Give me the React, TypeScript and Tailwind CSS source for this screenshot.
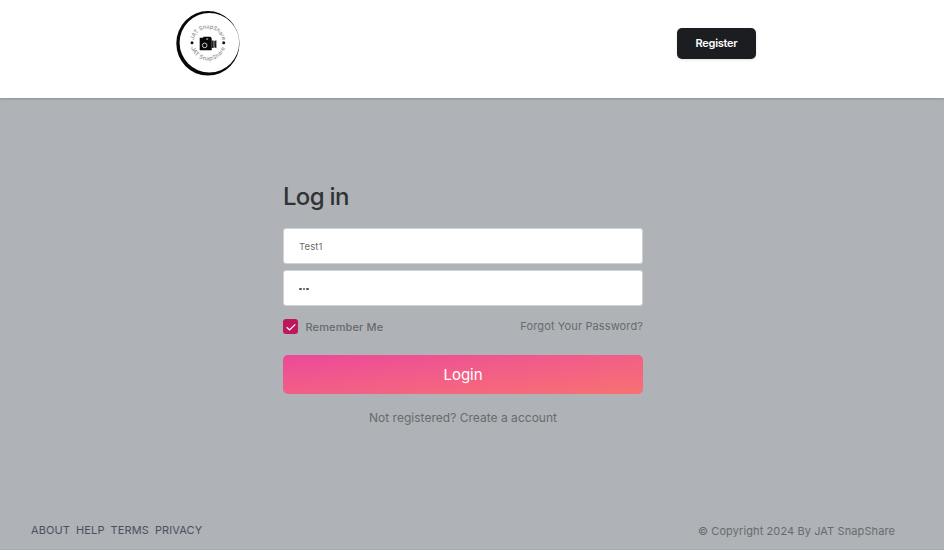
import React from 'react';

function Logo() {
  return (
    <svg viewBox="0 0 80 75" className="h-[75px] w-20" aria-label="JAT SnapShare">
      <defs>
        <path id="upper-arc" d="M 23.5 38 A 14.5 14.5 0 0 1 52.5 38" />
        <path id="lower-arc" d="M 20.5 38 A 17.5 17.5 0 0 0 55.5 38" />
      </defs>
      <path
        fillRule="evenodd"
        fill="#080808"
        d="M37.9 6A31.6 32.3 0 1 1 37.9 70.6A31.6 32.3 0 1 1 37.9 6ZM39.4 8A29.8 29.7 0 1 0 39.4 67.4A29.8 29.7 0 1 0 39.4 8Z"
      />
      <g fill="#777" fontSize="5.6" fontFamily="Inter, sans-serif" textAnchor="middle">
        <text letterSpacing="-.05">
          <textPath href="#upper-arc" startOffset="50%">JAT SnapShare</textPath>
        </text>
        <text letterSpacing=".4">
          <textPath href="#lower-arc" startOffset="50%">JAT SnapShare</textPath>
        </text>
      </g>
      <circle cx="22" cy="37.7" r="1.5" fill="#111" />
      <circle cx="53.7" cy="37.7" r="1.5" fill="#111" />
      <path d="M29.7 32.8h3l1-1h6.8l1.2 1.5v12H29.7z" fill="#080808" />
      <path d="M41.5 35.5h2.2v7.5h-2.2zM44.2 36l2.2-.8v8l-2.2-1z" fill="#222" />
      <circle cx="34.7" cy="40.4" r="2.3" fill="#080808" stroke="#ddd" strokeWidth=".9" />
      <rect x="36.2" y="33.3" width="2" height="1.5" fill="#999" />
    </svg>
  );
}

export default function App() {
  return (
    <div className="flex h-[550px] w-full flex-col bg-[#afb2b7] font-['Inter',sans-serif] text-[#686b6d]">
      <header className="flex h-[98px] shrink-0 items-start justify-between bg-white pr-[188px] pl-[170px] shadow-[0_1px_2px_rgba(0,0,0,0.2)]">
        <div className="pt-[5px]">
          <Logo />
        </div>
        <button className="mt-7 h-[31px] w-[79px] rounded-[5px] bg-[#1c1d21] text-[11px] font-semibold tracking-[-0.25px] text-white shadow-sm">
          Register
        </button>
      </header>

      <main className="flex grow justify-center pt-[84px] pr-[18px]">
        <form className="w-[360px]">
          <h1 className="text-2xl leading-[30px] font-medium tracking-[-0.7px] text-[#303234]">Log in</h1>
          <div className="mt-4 flex h-9 items-center rounded-[3px] border border-[#d1d2d4] bg-white px-[15px] pt-[3px] text-[9.5px] tracking-[0.1px]">
            Test1
          </div>
          <div className="mt-1.5 flex h-9 items-center gap-px rounded-[3px] border border-[#d1d2d4] bg-white px-[15px] pt-px">
            <i className="h-0.5 w-[2.7px] rounded-[1px] bg-[#555]" />
            <i className="h-0.5 w-[2.7px] rounded-[1px] bg-[#555]" />
            <i className="h-0.5 w-[2.7px] rounded-[1px] bg-[#555]" />
          </div>
          <div className="mt-[13px] flex h-[15px] items-center">
            <span className="flex h-[15px] w-[15px] items-center justify-center rounded-[3px] bg-[#be185d]">
              <svg viewBox="0 0 12 12" className="h-3 w-3" fill="none" stroke="#fff" strokeWidth="1.2">
                <path d="M1.7 6.2 4.6 9 10.3 3.3" />
              </svg>
            </span>
            <span className="ml-[7.5px] text-[11px] leading-[14px] font-medium tracking-[0.13px]">Remember Me</span>
            <a className="ml-auto pb-0.5 text-[11px] leading-[14px] tracking-[0.12px]">Forgot Your Password?</a>
          </div>
          <button
            type="button"
            className="mt-[21px] block h-[39px] w-full rounded-[5px] bg-linear-to-br from-[#ec4899] to-[#f87171] pt-px text-[15px] text-white"
          >
            Login
          </button>
          <p className="mt-4 text-center text-xs leading-4 tracking-[0.02px]">Not registered? Create a account</p>
        </form>
      </main>

      <footer className="flex h-[34px] shrink-0 items-start justify-between pr-[49px] pl-[31px] text-[11px] leading-[14px]">
        <nav className="flex gap-1.5 pt-2 tracking-[0.11px] text-[#4b5060]">
          <a>ABOUT</a>
          <a>HELP</a>
          <a>TERMS</a>
          <a>PRIVACY</a>
        </nav>
        <p className="pt-[9px] tracking-[0.1px]">© Copyright 2024 By JAT SnapShare</p>
      </footer>
      <div className="h-px shrink-0 bg-[#a9acb1]" />
    </div>
  );
}
